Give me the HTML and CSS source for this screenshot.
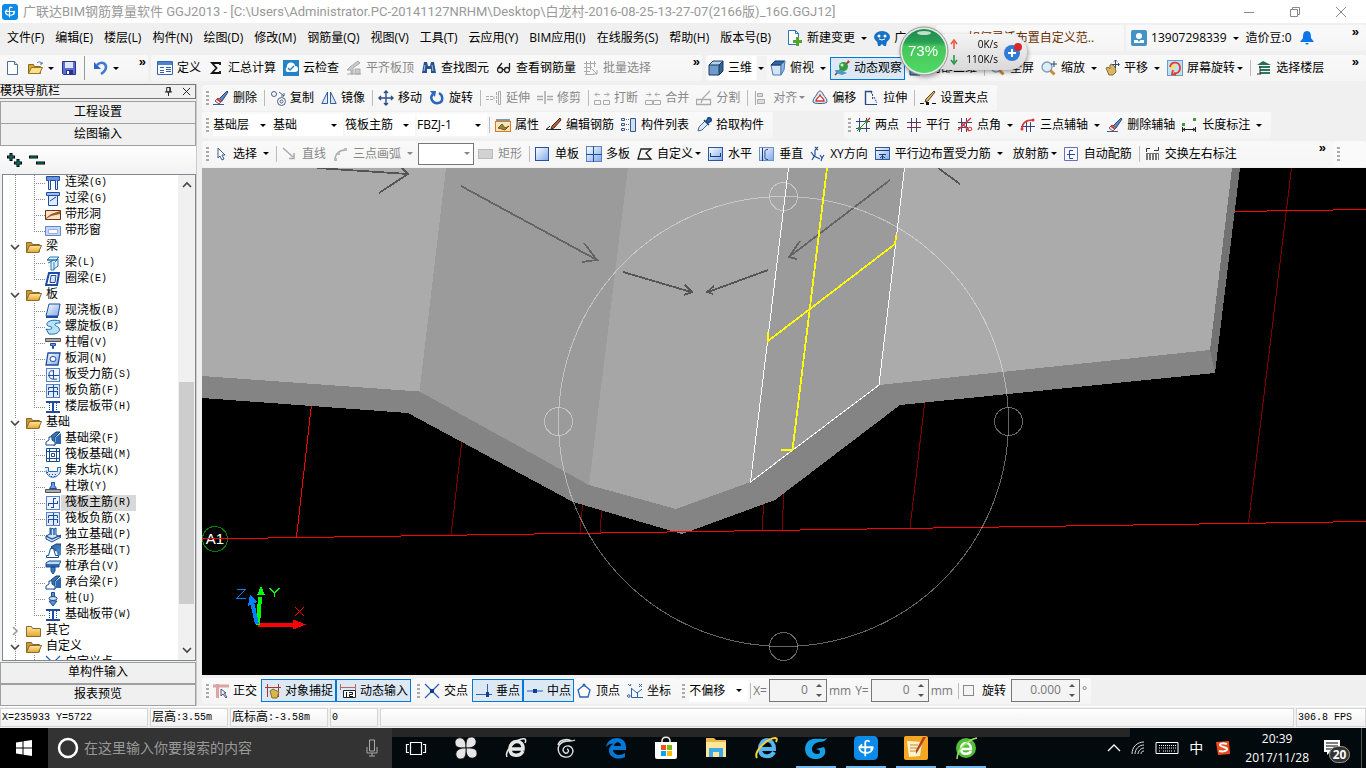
FILE: index.html
```html
<!DOCTYPE html>
<html lang="zh-CN">
<head>
<meta charset="utf-8">
<title>广联达BIM钢筋算量软件 GGJ2013</title>
<link rel="stylesheet" href="styles.css">
</head>
<body>
<svg class="defs" aria-hidden="true">
<defs>
<linearGradient id="gb" x1="0" y1="0" x2="1" y2="1"><stop offset="0" stop-color="#fff"/><stop offset="1" stop-color="#7fa8ea"/></linearGradient>
<linearGradient id="gf" x1="0" y1="0" x2="0" y2="1"><stop offset="0" stop-color="#ffe9a0"/><stop offset="1" stop-color="#e3a52e"/></linearGradient>
<linearGradient id="gl" x1="0" y1="0" x2="0" y2="1"><stop offset="0" stop-color="#1d8a4c"/><stop offset=".3" stop-color="#2aa055"/><stop offset=".4" stop-color="#45c75a"/><stop offset="1" stop-color="#4fd964"/></linearGradient>
</defs>
<symbol id="app" viewBox="0 0 16 16"><rect width="16" height="16" rx="3" fill="#0c8ae8"/><path d="M10 3.500C8.800 2.800 7.500 3 7.500 4.500V13M3.500 7.500h9M5 6L3.500 7.500c0 5 9 5 9 0M11.500 9l1-1.500" fill="none" stroke="#fff" stroke-width="1.200" stroke-linecap="round"/></symbol>
<symbol id="new" viewBox="0 0 16 16"><path d="M2.500 1.500h7l3 3v10h-10z" fill="#fff" stroke="#4d6d9b"/><path d="M9.500 1.500v3h3" fill="#dbe7f7" stroke="#4d6d9b"/></symbol>
<symbol id="open" viewBox="0 0 16 16"><path d="M.5 13.500V4.500h5l1 2h6v7z" fill="#d9a63b" stroke="#8a6a1c"/><path d="M.5 13.500l3-6h11l-3 6z" fill="#ffe08a" stroke="#9a7520"/><path d="M9 3c2-2 4-1 5 1m0-2v2h-2" fill="none" stroke="#4b6ea0"/></symbol>
<symbol id="save" viewBox="0 0 16 16"><path d="M1.500 1.500h13v13h-12l-1-1z" fill="#5d6fd0" stroke="#27348b"/><path d="M4 2h8v6H4z" fill="#dfe6fb"/><path d="M5 10h7v4H5z" fill="#27348b"/><path d="M6 11h2v3H6z" fill="#fff"/></symbol>
<symbol id="undo" viewBox="0 0 16 16"><path d="M4 5c4-4 9-2 9 2 0 3-2 5-5 7" fill="none" stroke="#4179d0" stroke-width="2.600"/><path d="M1 2v7h7z" fill="#2f66c4"/></symbol>
<symbol id="define" viewBox="0 0 16 16"><path d="M.5 1.500h15v13H.5z" fill="#fff" stroke="#3666b0"/><path d="M1 2h14v3H1z" fill="#4d84d0"/><path d="M3 7.500h4M3 10.500h4M9 7.500h5M9 9.500h5M9 11.500h5M3 12.500h4" stroke="#345e9e"/></symbol>
<symbol id="sum" viewBox="0 0 16 16"><path d="M12 5V3H4l4.500 5L4 13h8v-2" fill="none" stroke="#111" stroke-width="1.800"/></symbol>
<symbol id="cloud" viewBox="0 0 16 16"><rect width="16" height="16" fill="#2383c8"/><path d="M4 12a3 3 0 0 1 0-5 4 4 0 0 1 8-1 3 3 0 0 1 0 6z" fill="#fff"/><path d="M5 8l2 2 4-4" fill="none" stroke="#2383c8" stroke-width="1.500"/></symbol>
<symbol id="slab" viewBox="0 0 16 16"><path d="M1 10l3-3 8-6 2 2-7 5v6H5v-4zM9 9h5v5H9zM1 14h14" fill="#c9c9c9" stroke="#aaa"/></symbol>
<symbol id="find" viewBox="0 0 16 16"><path d="M3 2h3l1 4h2l1-4h3l2 11h-5V9H6v4H1z" fill="#27538f"/><path d="M4 5l-1 6M11 5l1 6" stroke="#9fc1ec"/></symbol>
<symbol id="glass" viewBox="0 0 16 16"><g fill="none" stroke="#222" stroke-width="1.300"><circle cx="4" cy="10" r="2.500"/><circle cx="11" cy="10" r="2.500"/><path d="M6.500 10q1-1 2 0M2 8l4-5M13.500 10V3"/></g></symbol>
<symbol id="batch" viewBox="0 0 16 16"><path d="M3.500 1v13M7.500 1v9M1 3.500h12M1 7.500h8M1 11.500h6M11.500 1v6M2 14.500h9M9 9l5 5m0-4v4h-4" fill="none" stroke="#aaa"/></symbol>
<symbol id="cube" viewBox="0 0 16 16"><path d="M1 5h10v10H1z" fill="#6f9ccc"/><path d="M1 5l4-4h10l-4 4z" fill="#b5d1ee"/><path d="M11 5l4-4v10l-4 4z" fill="#35608f"/><path d="M1 5h10v10H1zM1 5l4-4h10v10l-4 4M11 5l4-4" fill="none" stroke="#173a63"/></symbol>
<symbol id="topv" viewBox="0 0 16 16"><path d="M1 5h10v10H3z" fill="#d5e4f5" stroke="#4a7ab5"/><path d="M1 5l4-4h10l-4 4z" fill="#2c67a8" stroke="#173a63"/><path d="M11 5l4-4-1 9-3 5z" fill="#93b8df" stroke="#4a7ab5"/></symbol>
<symbol id="orbit" viewBox="0 0 16 16"><path d="M1 15L15 1" stroke="#7a3b1b" stroke-width="1.500"/><path d="M1 10h6l6 3-5 2-6-2z" fill="#4d9ac5"/><circle cx="9.500" cy="6.500" r="4.500" fill="#2f9b42"/><circle cx="8" cy="5" r="1.500" fill="#d8f5c5"/><path d="M14 0l2 2-4 3z" fill="#c33"/></symbol>
<symbol id="mag" viewBox="0 0 16 16"><circle cx="6" cy="7" r="5" fill="#dcecfb" stroke="#8299b5" stroke-width="1.300"/><path d="M9.500 10.500l4 4" stroke="#c58a3b" stroke-width="3"/><path d="M13 1v6M10 4h6" stroke="#27466e"/></symbol>
<symbol id="hand" viewBox="0 0 16 16"><path d="M2 8l2-1 2 2V5l2-1 3 3 1 5-3 3H5z" fill="#d8b866" stroke="#8b6a2a"/><path d="M11.500 0v8M8 4.500h7M10 1.500L11.500 0 13 1.500M14 3l1.500 1.500L14 6" fill="none" stroke="#334c78"/></symbol>
<symbol id="rot" viewBox="0 0 16 16"><rect x=".5" y=".5" width="15" height="15" fill="#bfe1fa" stroke="#6a9dcb"/><path d="M3 9V4h5v5zM9 15v-4h5" fill="#f4e06a"/><path d="M3 7c1-6 10-6 10 1 0 4-3 6-6 5M6 10l-1 4 4 1" fill="none" stroke="#e23b36" stroke-width="1.800"/></symbol>
<symbol id="floor" viewBox="0 0 16 16"><path d="M1 5l6-4 8 4z" fill="#286b56"/><path d="M3 7h11M4 10h10M4 13h10" stroke="#2b785c" stroke-width="2"/><path d="M4 6v8M1 14h4" stroke="#333"/></symbol>
<symbol id="erase" viewBox="0 0 16 16"><path d="M14 1l1 1-6 9-3-2z" fill="#5d88c3" stroke="#294979"/><path d="M5 8l4 3-3 3-4-3z" fill="#f6eef0" stroke="#7b5260"/><path d="M4 9l4 3" stroke="#d33" stroke-width="1.600"/><path d="M0 14.500h11" stroke="#355b91"/></symbol>
<symbol id="copy" viewBox="0 0 16 16"><g fill="none" stroke="#4c6287"><circle cx="4" cy="4" r="2.500"/><circle cx="11.500" cy="11.500" r="4"/><circle cx="11.500" cy="11.500" r="1.500"/><path d="M9 2l5 4m0-3v3h-3"/></g></symbol>
<symbol id="mirror" viewBox="0 0 16 16"><path d="M6.500 2v11.500H.8zM9.500 2v11.500h5.700z" fill="#dce8f7" stroke="#315b9b"/></symbol>
<symbol id="move" viewBox="0 0 16 16"><path d="M8 1v14M1 8h14M6 3l2-2 2 2M6 13l2 2 2-2M3 6L1 8l2 2M13 6l2 2-2 2" fill="none" stroke="#2d5082" stroke-width="1.400"/></symbol>
<symbol id="spin" viewBox="0 0 16 16"><path d="M4 4c-4 4 0 10 5 9 6-1 5-8 1-10" fill="none" stroke="#2c65bd" stroke-width="2.500"/><path d="M7 1H1l5 6z" fill="#2c65bd"/></symbol>
<symbol id="extend" viewBox="0 0 16 16"><path d="M0 6.500h8v3H0M10.500 2v12" fill="none" stroke="#aaa" stroke-dasharray="3 1"/><path d="M12.500 1.500h2v13h-2z" fill="none" stroke="#aaa"/></symbol>
<symbol id="trim" viewBox="0 0 16 16"><path d="M0 6.500h6M0 9.500h6M10 6.500h6M10 9.500h6M8 1v13" fill="none" stroke="#aaa" stroke-width="1.500"/></symbol>
<symbol id="brk" viewBox="0 0 16 16"><path d="M.5 10.500h6v4h-6zM9.500 10.500h6v4h-6zM1 4.500h5M10 4.500h5M3 2.500l-2 2 2 2M13 2.500l2 2-2 2" fill="none" stroke="#aaa"/></symbol>
<symbol id="join" viewBox="0 0 16 16"><path d="M.5 10.500h7v4h-7zM8.500 10.500h7v4h-7zM1 4.500h5M10 4.500h5M4 2.500l2 2-2 2M12 2.500l-2 2 2 2" fill="none" stroke="#aaa"/></symbol>
<symbol id="split" viewBox="0 0 16 16"><path d="M.5 9.500h14v5H.5zM14 1l-7 7-2 5" fill="none" stroke="#aaa" stroke-width="1.300"/></symbol>
<symbol id="align" viewBox="0 0 16 16"><path d="M2.500 1v14M4.500 3.500h5v3h-5zM4.500 9.500h7v4h-7z" fill="#ddd" stroke="#aaa"/></symbol>
<symbol id="offset" viewBox="0 0 16 16"><path d="M1 12c0-4 2-4 4-8 2-4 4-4 6 0 2 4 4 4 4 8 0 2-14 2-14 0z" fill="#e3edf9" stroke="#355b8c"/><path d="M4 11c0-3 2-2 4-6 2 4 4 3 4 6z" fill="#fff" stroke="#d3362e" stroke-width="1.300"/></symbol>
<symbol id="stretch" viewBox="0 0 16 16"><path d="M2.500 14.500V1.500h6v2" fill="none" stroke="#244c8d" stroke-width="1.400"/><path d="M2 14.500h12" stroke="#244c8d"/><path d="M9.500 4v6M11 7l3 6" stroke="#244c8d" stroke-dasharray="2 1"/></symbol>
<symbol id="grippt" viewBox="0 0 16 16"><path d="M14 1l1 1-7 9-3 1 1-3z" fill="#eeb45a" stroke="#59432c"/><path d="M0 13.500h4M12 13.500h4" stroke="#111"/><path d="M6 12h3v3H6z" fill="#111"/></symbol>
<symbol id="props" viewBox="0 0 16 16"><path d="M1 2h14v3H1z" fill="#7b97b8"/><rect x=".5" y="4.500" width="15" height="10" fill="#fbe5ba" stroke="#d77a23"/><path d="M3 11l4-4 3 4 4-2-4 4z" fill="#7a933c" stroke="#8b4e14"/></symbol>
<symbol id="editr" viewBox="0 0 16 16"><path d="M4 9l-4 3.500h15" fill="none" stroke="#222"/><path d="M14 1l1 2-7 8-3 1 1-3z" fill="#b0613b" stroke="#4c2a18"/></symbol>
<symbol id="list" viewBox="0 0 16 16"><path d="M.5 1.500h3v2h-3zM.5 6.500h3v2h-3zM.5 11.500h3v2h-3z" fill="none" stroke="#35588c"/><path d="M5 2.500h3M5 7.500h3M5 12.500h3" stroke="#666" stroke-dasharray="1 1"/><path d="M9.500 1.500h5v13h-5z" fill="#cfe0f5" stroke="#35588c"/></symbol>
<symbol id="pick" viewBox="0 0 16 16"><path d="M2 14l1-4 6-6 3 3-6 6z" fill="#dceafa" stroke="#4d6a90"/><path d="M8 3l5 5M10 5l2-4c2-1 4 1 3 3l-3 2z" fill="#2f67ad" stroke="#1b457f" stroke-width="1.500"/></symbol>
<symbol id="twopt" viewBox="0 0 16 16"><path d="M4.500 1v14M11.500 1v14M1 4.500h14M1 11.500h14" stroke="#35467c"/><path d="M2 14L13 3" stroke="#2a8a2a"/><path d="M3 10h3v3H3zM10 3h3v3h-3z" fill="#2a9a2a"/><path d="M12 4l3-3" stroke="#d22" stroke-width="1.500"/></symbol>
<symbol id="par" viewBox="0 0 16 16"><path d="M5.500 1v14M10.500 1v14" stroke="#35467c"/><path d="M1 5.500h14M1 10.500h14" stroke="#7b2b42"/></symbol>
<symbol id="ptang" viewBox="0 0 16 16"><path d="M4.500 1v14M9.500 1v14M1 5.500h14M1 10.500h10" stroke="#35467c"/><path d="M1 13L14 1M5 6l7 8" stroke="#d33" stroke-width="1.400"/><circle cx="13" cy="12" r="1.800" fill="none" stroke="#d33"/></symbol>
<symbol id="threeax" viewBox="0 0 16 16"><path d="M6.500 4v11M10.500 5v10M1 9.500h14" stroke="#35467c"/><path d="M2 12c0-6 3-9 11-9" fill="none" stroke="#d33" stroke-width="1.500"/><circle cx="2" cy="12" r="1.500" fill="#d33"/><circle cx="13" cy="3" r="1.500" fill="#d33"/></symbol>
<symbol id="len" viewBox="0 0 16 16"><path d="M1 12.500h13M.5 10v5M13.500 10v5M3 11l-2 1.500L3 14M11 11l2 1.500-2 1.500" fill="none" stroke="#222"/><path d="M0 6h3v3H0zM11 1h3v3h-3z" fill="#3a9b3a"/></symbol>
<symbol id="cursor" viewBox="0 0 16 16"><path d="M5 2v10l2-2 2 4 2-1-2-4h3z" fill="#fff" stroke="#3c5a86"/></symbol>
<symbol id="line" viewBox="0 0 16 16"><path d="M1 2l10 9M12 7v5.500H7" fill="none" stroke="#aaa" stroke-width="1.500"/></symbol>
<symbol id="arc" viewBox="0 0 16 16"><path d="M2 14c0-6 4-10 10-10" fill="none" stroke="#aaa" stroke-width="1.300"/><path d="M1 12h3v3H1zM4 6h3v3H4zM11 2h3v3h-3z" fill="#bbb"/></symbol>
<symbol id="rect" viewBox="0 0 16 16"><rect x=".5" y="3.500" width="14" height="9" fill="#d2d2d2" stroke="#bbb"/></symbol>
<symbol id="one" viewBox="0 0 16 16"><rect x=".5" y="1.500" width="13" height="13" fill="url(#gb)" stroke="#2651a8"/></symbol>
<symbol id="multi" viewBox="0 0 16 16"><rect x=".5" y=".5" width="15" height="15" fill="url(#gb)" stroke="#5d83be"/><path d="M0 8.500h16M7.500 0v16" stroke="#234d8f"/></symbol>
<symbol id="poly" viewBox="0 0 16 16"><path d="M1 13L4 3h10L9 7l5 6z" fill="none" stroke="#222" stroke-width="1.300"/></symbol>
<symbol id="hor" viewBox="0 0 16 16"><rect x=".5" y="1.500" width="14" height="13" fill="url(#gb)" stroke="#2c57a0"/><path d="M2 10.500h11M2.500 7v3M12.500 7v3" stroke="#183d7c"/></symbol>
<symbol id="ver" viewBox="0 0 16 16"><rect x=".5" y="1.500" width="14" height="13" fill="url(#gb)" stroke="#6b8fc8"/><path d="M9 3.500c-4 0-3 2-3 5s-1 5 3 5M3.500 2v13" fill="none" stroke="#183d7c"/></symbol>
<symbol id="xy" viewBox="0 0 16 16"><path d="M1 6l3 4 6 3M5 4v5l-3 5M5 1l3 3M8 1L5 4M10 9l2 3 2-3M12 12l-1 3" fill="none" stroke="#234f96" stroke-width="1.200"/></symbol>
<symbol id="edge" viewBox="0 0 16 16"><rect x=".5" y="1.500" width="14" height="12" fill="url(#gb)" stroke="#2f5799"/><path d="M1 4.500h13M4 8.500h7M7.500 8v5M5 12l2.500-2 2.500 2" fill="none" stroke="#183d7c"/></symbol>
<symbol id="auto" viewBox="0 0 16 16"><path d="M.5 1.500h13v13H.5z" fill="#f6f9ff" stroke="#6d6dba"/><path d="M9 4.500H5.500v8H9M3 8.500h8" fill="none" stroke="#274ca0"/></symbol>
<symbol id="swap" viewBox="0 0 16 16"><path d="M1 7h13v7H1z" fill="#777"/><path d="M3.500 8v6M6.500 8v6M9.500 8v6M12.500 8v6" stroke="#fff"/><path d="M1.500 6V2.500H5M9 4.500h4.500V1" fill="none" stroke="#333"/></symbol>
<symbol id="change" viewBox="0 0 16 16"><path d="M1.500.5h7l3 3v11h-10z" fill="#fff" stroke="#2877bd"/><path d="M8.500.5v3h3" fill="none" stroke="#2877bd"/><path d="M9 7h3v3h3v3h-3v3H9v-3H6v-3h3z" fill="#53a62c"/></symbol>
<symbol id="bot" viewBox="0 0 16 16"><ellipse cx="8" cy="7" rx="8" ry="6" fill="#1672c4"/><path d="M3 11h10l-1 5h-2l-2-2-2 2H4z" fill="#1672c4"/><circle cx="5" cy="6" r="1.500" fill="#fff"/><circle cx="11" cy="6" r="1.500" fill="#fff"/><path d="M5 9q3 2 6 0" fill="none" stroke="#fff"/></symbol>
<symbol id="user" viewBox="0 0 16 16"><rect width="16" height="16" rx="2" fill="#4393c7"/><circle cx="8" cy="6" r="3" fill="#fff"/><path d="M3 10h10v3H3z" fill="#fff"/><path d="M6 9l2 3 2-3" fill="#4393c7"/></symbol>
<symbol id="bell" viewBox="0 0 16 16"><path d="M8 1c4 0 4 4 4 7l3 4H1l3-4c0-3 0-7 4-7z" fill="#0d75e8"/><path d="M6 13h4l-2 2z" fill="#0d75e8"/></symbol>
<symbol id="ortho" viewBox="0 0 16 16"><path d="M0 3h16M4.500 1v14" stroke="#dba3a3" stroke-width="3"/><path d="M8 6v7l2-2 3 4 1-1-3-4h2z" fill="#eef" stroke="#557"/></symbol>
<symbol id="snap" viewBox="0 0 16 16"><path d="M0 4.500h16M2.500 1v13M13.500 1v13" stroke="#a33"/><path d="M5 8l3-2 6 3-2 6H7z" fill="#d8b64e" stroke="#8b6a2a"/></symbol>
<symbol id="dyn" viewBox="0 0 16 16"><path d="M0 4.500h16M.5 1v6M15.500 1v6" stroke="#b66"/><path d="M3.500 7.500h12v7h-12z" fill="#fff" stroke="#222"/><path d="M6.500 9v5M9 9.500h3.500v2h-3v2H13" fill="none" stroke="#111"/></symbol>
<symbol id="cross" viewBox="0 0 16 16"><path d="M1 1l14 14M15 1L1 15" stroke="#2c62b5" stroke-width="1.300"/><path d="M6 6h4v4H6z" fill="#123c8c"/></symbol>
<symbol id="perp" viewBox="0 0 16 16"><path d="M11.500 1v10M0 11.500h16" stroke="#2c62b5"/><path d="M10 9h3v5h-3z" fill="#123c8c"/></symbol>
<symbol id="midp" viewBox="0 0 16 16"><path d="M0 8h16" stroke="#5b8bd0" stroke-width="1.500"/><path d="M6 6h4v4H6z" fill="#123c8c"/></symbol>
<symbol id="vert" viewBox="0 0 16 16"><path d="M8 2l6 5-2 7H4L2 7z" fill="#fff" stroke="#2c62b5" stroke-width="1.300"/><circle cx="8" cy="2" r="1.500" fill="#2c62b5"/></symbol>
<symbol id="coord" viewBox="0 0 16 16"><path d="M4.500 5v9.500H16M4 5l6 5 5-4M1 1l2 2 1-2M12 1l3 3M15 1l-3 3M10.500 9v5" fill="none" stroke="#2c62b5"/><circle cx="1.800" cy="13" r="1.300" fill="none" stroke="#2c62b5"/></symbol>
<symbol id="fo" viewBox="0 0 16 16"><path d="M.5 13V3.500h5l1 2h7V13z" fill="#c9973c" stroke="#8a6a2c"/><path d="M.5 13.500l3-7h12l-3 7z" fill="url(#gf)" stroke="#8a6a2c"/></symbol>
<symbol id="fc" viewBox="0 0 16 16"><path d="M.5 13.500v-10h5l1 2h8v8z" fill="url(#gf)" stroke="#8a6a2c"/></symbol>
<symbol id="t-lian" viewBox="0 0 16 16"><path d="M1.500 1.500h13v4h-13z" fill="#6b93dd" stroke="#1c4ba0"/><path d="M3.500 5.500v9h2v-9M10.500 5.500v9h2v-9" fill="#e4eefc" stroke="#1c4ba0"/></symbol>
<symbol id="t-guo" viewBox="0 0 16 16"><path d="M1.500 1.500h13v3h-13z" fill="#9fbdf0" stroke="#1c4ba0"/><path d="M3.500 4.500h9v10h-9zM5 10l6-4" fill="#dfeafd" stroke="#1c4ba0"/></symbol>
<symbol id="t-dong" viewBox="0 0 16 16"><path d="M.5 3.500h15v9H.5z" fill="#fbe2c8" stroke="#6e3510"/><path d="M1 11l5-4 9-3v3l-9 2-5 3z" fill="#9c5b28"/></symbol>
<symbol id="t-win" viewBox="0 0 16 16"><path d="M.5 3.500h15v9H.5z" fill="#c6d7fa" stroke="#6485cd"/><path d="M3.500 6.500h9v4h-9z" fill="#fff" stroke="#94aee6"/></symbol>
<symbol id="t-liang" viewBox="0 0 16 16"><path d="M2 5l3-3h9l-3 3zM6 6v9h3V7M10 7l3-3v7l-4 3M2 5l9 0M3 8l6-3" fill="#dff1fb" stroke="#2474b4"/></symbol>
<symbol id="t-quan" viewBox="0 0 16 16"><path d="M4 2h10l-2 12H1z" fill="#fff" stroke="#1c4ba0" stroke-width="2"/><path d="M6 4.500h5l-1 7H5z" fill="#d7e4fa" stroke="#1c4ba0"/></symbol>
<symbol id="t-ban" viewBox="0 0 16 16"><path d="M4 1h11l-2 12H1z" fill="url(#gb)" stroke="#1c4ba0"/><path d="M1 14h12" stroke="#1c4ba0" stroke-width="2"/></symbol>
<symbol id="t-luo" viewBox="0 0 16 16"><path d="M15 2C8 0 1 2 2 6c1 2 5 1 5 3 0 1-3 2-6 1l3 5c7 1 12-2 10-6-1-2-5-2-4-4 1-1 3-1 5-1z" fill="#b7e3f8" stroke="#1f6ab4"/></symbol>
<symbol id="t-mao" viewBox="0 0 16 16"><path d="M.5 3.500h15v3H.5z" fill="#aaa" stroke="#555"/><path d="M5.500 8.500h5v2h-2v3h-1v-3h-2z" fill="#6f9fe8" stroke="#1c4ba0"/></symbol>
<symbol id="t-hole" viewBox="0 0 16 16"><path d="M3 2h12l-2 12H1z" fill="url(#gb)" stroke="#1c4ba0" stroke-width="1.300"/><ellipse cx="8" cy="8" rx="3" ry="2.500" fill="#fff" stroke="#1c4ba0"/></symbol>
<symbol id="t-s" viewBox="0 0 16 16"><rect x="1.500" y="1.500" width="13" height="13" fill="#eef4ff" stroke="#5a80ca"/><path d="M3 8.500h11M8 4c-3-1-4 1-4 4s2 5 8 4M8.500 3v9" fill="none" stroke="#1c4ba0"/></symbol>
<symbol id="t-f" viewBox="0 0 16 16"><rect x="1.500" y="1.500" width="13" height="13" fill="#e0eafd" stroke="#5a80ca"/><path d="M8.500 2v12M3.500 7V4.500h9V7M3.500 9v3M12.500 9v3M3 8.500h10" fill="none" stroke="#1c4ba0"/></symbol>
<symbol id="t-dai" viewBox="0 0 16 16"><path d="M1 3h14M1 13h14" stroke="#1c4ba0" stroke-width="2"/><path d="M4.500 4v8M11.500 4v8" stroke="#1c4ba0" stroke-dasharray="1 1"/><path d="M8 4v8" stroke="#1c4ba0" stroke-width="2"/></symbol>
<symbol id="t-jl" viewBox="0 0 16 16"><path d="M6 5l5-4h4l-5 5v8H8z" fill="#3b72b4" stroke="#123f7b"/><path d="M1 14v-3l3-2V6h3v3l3 2v3z" fill="#fff" stroke="#174c91"/><path d="M11 6l5-4v11h-5z" fill="#2d66ac"/></symbol>
<symbol id="t-fa" viewBox="0 0 16 16"><path d="M1.500 1.500h13v13h-13zM6.500 6.500h3v3h-3zM1 4.500h14M1 11.500h14M4.500 1v14M11.500 1v14" fill="none" stroke="#174c91"/></symbol>
<symbol id="t-keng" viewBox="0 0 16 16"><path d="M0 4.500h3.500v4h9v-4H16c0 12-14 13-15 3" fill="#dbe9fb" stroke="#2b69b4"/><path d="M4 11.500h8M2.500 9v1M6 13.500h5" stroke="#174c91" stroke-dasharray="1 2"/></symbol>
<symbol id="t-dun" viewBox="0 0 16 16"><path d="M.5 10.500h15v3H.5z" fill="#aaa" stroke="#555"/><path d="M4.500 9.500l2-3v-3h3v3l2 3z" fill="#6f9fe8" stroke="#1c4ba0"/></symbol>
<symbol id="t-r" viewBox="0 0 16 16"><rect x="1.500" y="1.500" width="13" height="13" fill="#eef4ff" stroke="#5a80ca"/><path d="M8.500 3v10M3 8.500h10M3.500 8v3M12.500 8.500V6M8.500 3.500H11M8.500 12.500H6" fill="none" stroke="#1c4ba0"/></symbol>
<symbol id="t-p" viewBox="0 0 16 16"><path d="M5 1l4 1 2-1v7l5 2-9 5-6-3V9l4-2z" fill="#cfe2f8" stroke="#174c91"/><path d="M6 2v6M9 2v6M1 9l6 3 9-4" fill="none" stroke="#174c91" stroke-width="1.300"/></symbol>
<symbol id="t-t" viewBox="0 0 16 16"><path d="M6 4l5-3h5v3l-5 4z" fill="#3b72b4" stroke="#123f7b"/><path d="M11 7l5-4v9l-3 1z" fill="#4a80be"/><path d="M1.500 14.500v-2h2l2-7h3l2 7h3v2z" fill="#fff" stroke="#174c91"/></symbol>
<symbol id="t-v" viewBox="0 0 16 16"><path d="M1 4l3-2h12l-2 4H1z" fill="#bcd8f5" stroke="#174c91"/><path d="M1 6h13v2H1zM6 8h4v4l-2 3-2-3z" fill="#3d78bd" stroke="#174c91"/></symbol>
<symbol id="t-u" viewBox="0 0 16 16"><path d="M6.500 1.500h3V10H12l-4 5-4-5h2.500z" fill="#5b90cc" stroke="#174c91"/><ellipse cx="8" cy="7.500" rx="4" ry="2" fill="#cfe2f8" stroke="#174c91"/></symbol>
</svg>

<header class="titlebar">
  <svg class="i"><use href="#app"/></svg>
  <h1>广联达BIM钢筋算量软件 GGJ2013 - [C:\Users\Administrator.PC-20141127NRHM\Desktop\白龙村-2016-08-25-13-27-07(2166版)_16G.GGJ12]</h1>
  <div class="winbtns">
    <button aria-label="最小化"><svg viewBox="0 0 12 12"><path d="M1 6.500h10"/></svg></button>
    <button aria-label="还原"><svg viewBox="0 0 12 12"><path d="M1.500 3.500h7v7h-7zM3.500 3.500v-2h7v7h-2"/></svg></button>
    <button aria-label="关闭"><svg viewBox="0 0 12 12"><path d="M1 1l10 10M11 1L1 11"/></svg></button>
  </div>
</header>

<div class="menubar">
  <nav class="menu">
    <button>文件(F)</button><button>编辑(E)</button><button>楼层(L)</button><button>构件(N)</button><button>绘图(D)</button><button>修改(M)</button><button>钢筋量(Q)</button><button>视图(V)</button><button>工具(T)</button><button>云应用(Y)</button><button>BIM应用(I)</button><button>在线服务(S)</button><button>帮助(H)</button><button>版本号(B)</button>
  </nav>
  <div class="band plain">
    <button class="t wide"><svg class="i"><use href="#change"/></svg>新建变更</button>
    <button class="t"><svg class="i"><use href="#bot"/></svg>广小二</button>
  </div>
  <div class="band notice"><a href="#tip">如何灵活布置自定义范..</a></div>
  <div class="band account">
    <button class="t wide"><svg class="i"><use href="#user"/></svg>13907298339</button>
    <button class="t">造价豆:0</button>
    <button class="t" aria-label="消息"><svg class="i"><use href="#bell"/></svg></button>
    <button class="more">»</button>
  </div>
</div>

<div class="mainbar">
  <div class="band files">
    <button class="t" aria-label="新建"><svg class="i"><use href="#new"/></svg></button>
    <button class="t wide" aria-label="打开"><svg class="i"><use href="#open"/></svg></button>
    <button class="t" aria-label="保存"><svg class="i"><use href="#save"/></svg></button>
    <i class="sep dark"></i>
    <button class="t wide" aria-label="撤销"><svg class="i"><use href="#undo"/></svg></button>
    <button class="more">»</button>
  </div>
  <div class="band tools">
    <button class="t"><svg class="i"><use href="#define"/></svg>定义</button>
    <button class="t"><svg class="i"><use href="#sum"/></svg>汇总计算</button>
    <button class="t"><svg class="i"><use href="#cloud"/></svg>云检查</button>
    <button class="t" disabled><svg class="i"><use href="#slab"/></svg>平齐板顶</button>
    <button class="t"><svg class="i"><use href="#find"/></svg>查找图元</button>
    <button class="t"><svg class="i"><use href="#glass"/></svg>查看钢筋量</button>
    <button class="t" disabled><svg class="i"><use href="#batch"/></svg>批量选择</button>
    <button class="more">»</button>
  </div>
  <div class="band views">
    <button class="t wide white"><svg class="i"><use href="#cube"/></svg>三维</button>
    <button class="t wide"><svg class="i"><use href="#topv"/></svg>俯视</button>
    <button class="t on"><svg class="i"><use href="#orbit"/></svg>动态观察</button>
    <button class="t"><svg class="i"><use href="#cube"/></svg>局部三维</button>
    <i class="sep"></i>
    <button class="t"><svg class="i"><use href="#mag"/></svg>全屏</button>
    <button class="t wide"><svg class="i"><use href="#mag"/></svg>缩放</button>
    <button class="t wide"><svg class="i"><use href="#hand"/></svg>平移</button>
    <button class="t narrow"><svg class="i"><use href="#rot"/></svg>屏幕旋转</button>
    <i class="sep"></i>
    <button class="t"><svg class="i"><use href="#floor"/></svg>选择楼层</button>
    <button class="more">»</button>
  </div>
</div>

<div class="work">
  <aside class="side">
    <div class="sidehead"><h2>模块导航栏</h2>
      <button aria-label="固定"><svg viewBox="0 0 10 10"><path d="M3 .5h4v5H3zM6.500 1v4M1 5.500h8M5 6v4"/></svg></button>
      <button aria-label="关闭"><svg viewBox="0 0 10 10"><path d="M1 1l8 8M9 1L1 9"/></svg></button></div>
    <button class="sbtn">工程设置</button>
    <button class="sbtn">绘图输入</button>
    <div class="sidetools">
      <button aria-label="全部展开"><svg viewBox="0 0 18 16"><path d="M6 1v8M2 5h8M13 7v8M9 11h8" stroke="#000" stroke-width="3"/><path d="M6 2v6M3 5h6M13 8v6M10 11h6" stroke="#00988c"/></svg></button>
      <button aria-label="全部折叠"><svg viewBox="0 0 18 16"><path d="M1 5h9M8 11h9" stroke="#000" stroke-width="3"/><path d="M2 5h7M9 11h7" stroke="#00988c"/></svg></button>
    </div>
    <div class="treebox">
      <ul class="tree">
        <li><ul>
          <li><svg class="i"><use href="#t-lian"/></svg>连梁<b>(G)</b></li>
          <li><svg class="i"><use href="#t-guo"/></svg>过梁<b>(G)</b></li>
          <li><svg class="i"><use href="#t-dong"/></svg>带形洞</li>
          <li class="last"><svg class="i"><use href="#t-win"/></svg>带形窗</li>
        </ul></li>
        <li><div class="folder"><svg class="chev"><path d="M1 2l4 4 4-4"/></svg><svg class="i"><use href="#fo"/></svg>梁</div><ul>
          <li><svg class="i"><use href="#t-liang"/></svg>梁<b>(L)</b></li>
          <li class="last"><svg class="i"><use href="#t-quan"/></svg>圈梁<b>(E)</b></li>
        </ul></li>
        <li><div class="folder"><svg class="chev"><path d="M1 2l4 4 4-4"/></svg><svg class="i"><use href="#fo"/></svg>板</div><ul>
          <li><svg class="i"><use href="#t-ban"/></svg>现浇板<b>(B)</b></li>
          <li><svg class="i"><use href="#t-luo"/></svg>螺旋板<b>(B)</b></li>
          <li><svg class="i"><use href="#t-mao"/></svg>柱帽<b>(V)</b></li>
          <li><svg class="i"><use href="#t-hole"/></svg>板洞<b>(N)</b></li>
          <li><svg class="i"><use href="#t-s"/></svg>板受力筋<b>(S)</b></li>
          <li><svg class="i"><use href="#t-f"/></svg>板负筋<b>(F)</b></li>
          <li class="last"><svg class="i"><use href="#t-dai"/></svg>楼层板带<b>(H)</b></li>
        </ul></li>
        <li><div class="folder"><svg class="chev"><path d="M1 2l4 4 4-4"/></svg><svg class="i"><use href="#fo"/></svg>基础</div><ul>
          <li><svg class="i"><use href="#t-jl"/></svg>基础梁<b>(F)</b></li>
          <li><svg class="i"><use href="#t-fa"/></svg>筏板基础<b>(M)</b></li>
          <li><svg class="i"><use href="#t-keng"/></svg>集水坑<b>(K)</b></li>
          <li><svg class="i"><use href="#t-dun"/></svg>柱墩<b>(Y)</b></li>
          <li><svg class="i"><use href="#t-r"/></svg><span class="sel">筏板主筋<b>(R)</b></span></li>
          <li><svg class="i"><use href="#t-f"/></svg>筏板负筋<b>(X)</b></li>
          <li><svg class="i"><use href="#t-p"/></svg>独立基础<b>(P)</b></li>
          <li><svg class="i"><use href="#t-t"/></svg>条形基础<b>(T)</b></li>
          <li><svg class="i"><use href="#t-v"/></svg>桩承台<b>(V)</b></li>
          <li><svg class="i"><use href="#t-jl"/></svg>承台梁<b>(F)</b></li>
          <li><svg class="i"><use href="#t-u"/></svg>桩<b>(U)</b></li>
          <li class="last"><svg class="i"><use href="#t-dai"/></svg>基础板带<b>(W)</b></li>
        </ul></li>
        <li><div class="folder"><svg class="chev closed"><path d="M3 0l4 4-4 4"/></svg><svg class="i"><use href="#fc"/></svg>其它</div></li>
        <li><div class="folder"><svg class="chev"><path d="M1 2l4 4 4-4"/></svg><svg class="i"><use href="#fo"/></svg>自定义</div><ul>
          <li><svg class="i"><use href="#cross"/></svg>自定义点</li>
        </ul></li>
      </ul>
      <div class="scroll">
        <svg class="chev"><path d="M1 6l4-4 4 4"/></svg>
        <div class="track"><div class="thumb"></div></div>
        <svg class="chev"><path d="M1 2l4 4 4-4"/></svg>
      </div>
    </div>
    <button class="sbtn">单构件输入</button>
    <button class="sbtn">报表预览</button>
  </aside>

  <main class="main">
    <div class="row r3"><div class="band grip">
      <button class="t"><svg class="i"><use href="#erase"/></svg>删除</button><i class="sep"></i>
      <button class="t"><svg class="i"><use href="#copy"/></svg>复制</button>
      <button class="t"><svg class="i"><use href="#mirror"/></svg>镜像</button><i class="sep"></i>
      <button class="t"><svg class="i"><use href="#move"/></svg>移动</button>
      <button class="t"><svg class="i"><use href="#spin"/></svg>旋转</button><i class="sep"></i>
      <button class="t" disabled><svg class="i"><use href="#extend"/></svg>延伸</button>
      <button class="t" disabled><svg class="i"><use href="#trim"/></svg>修剪</button><i class="sep"></i>
      <button class="t" disabled><svg class="i"><use href="#brk"/></svg>打断</button>
      <button class="t" disabled><svg class="i"><use href="#join"/></svg>合并</button>
      <button class="t" disabled><svg class="i"><use href="#split"/></svg>分割</button><i class="sep"></i>
      <button class="t narrow" disabled><svg class="i"><use href="#align"/></svg>对齐</button>
      <button class="t"><svg class="i"><use href="#offset"/></svg>偏移</button>
      <button class="t"><svg class="i"><use href="#stretch"/></svg>拉伸</button><i class="sep"></i>
      <button class="t"><svg class="i"><use href="#grippt"/></svg>设置夹点</button>
    </div></div>
    <div class="row r4">
      <div class="band grip">
        <span class="combo s"><select aria-label="楼层"><option>基础层</option></select></span>
        <span class="combo"><select aria-label="构件类型"><option>基础</option></select></span>
        <span class="combo"><select aria-label="构件"><option>筏板主筋</option></select></span>
        <span class="combo"><select aria-label="构件名称"><option>FBZJ-1</option></select></span>
        <i class="sep"></i>
        <button class="t"><svg class="i"><use href="#props"/></svg>属性</button>
        <button class="t"><svg class="i"><use href="#editr"/></svg>编辑钢筋</button>
        <button class="t"><svg class="i"><use href="#list"/></svg>构件列表</button>
        <button class="t"><svg class="i"><use href="#pick"/></svg>拾取构件</button>
      </div>
      <div class="band grip axis">
        <button class="t"><svg class="i"><use href="#twopt"/></svg>两点</button>
        <button class="t"><svg class="i"><use href="#par"/></svg>平行</button>
        <button class="t wide"><svg class="i"><use href="#ptang"/></svg>点角</button>
        <button class="t wide"><svg class="i"><use href="#threeax"/></svg>三点辅轴</button>
        <button class="t"><svg class="i"><use href="#erase"/></svg>删除辅轴</button>
        <button class="t wide"><svg class="i"><use href="#len"/></svg>长度标注</button>
      </div>
    </div>
    <div class="row r5">
      <div class="band grip fill">
        <button class="t wide"><svg class="i"><use href="#cursor"/></svg>选择</button><i class="sep"></i>
        <button class="t" disabled><svg class="i"><use href="#line"/></svg>直线</button>
        <button class="t wide" disabled><svg class="i"><use href="#arc"/></svg>三点画弧</button>
        <span class="combo boxed"><select aria-label="画弧方式" disabled><option></option></select></span>
        <button class="t" disabled><svg class="i"><use href="#rect"/></svg>矩形</button><i class="sep"></i>
        <button class="t"><svg class="i"><use href="#one"/></svg>单板</button>
        <button class="t"><svg class="i"><use href="#multi"/></svg>多板</button>
        <button class="t narrow"><svg class="i"><use href="#poly"/></svg>自定义</button>
        <button class="t"><svg class="i"><use href="#hor"/></svg>水平</button>
        <button class="t"><svg class="i"><use href="#ver"/></svg>垂直</button>
        <button class="t"><svg class="i"><use href="#xy"/></svg>XY方向</button>
        <button class="t wide"><svg class="i"><use href="#edge"/></svg>平行边布置受力筋</button>
        <button class="t narrow textonly">放射筋</button>
        <button class="t"><svg class="i"><use href="#auto"/></svg>自动配筋</button><i class="sep"></i>
        <button class="t"><svg class="i"><use href="#swap"/></svg>交换左右标注</button>
        <button class="more">»</button>
      </div>
      <div class="band grip stub"></div>
    </div>

    <svg class="view" viewBox="202 168 1164 507" preserveAspectRatio="xMidYMid slice" role="img" aria-label="三维视图">
      <rect x="0" y="0" width="1600" height="900" fill="#000"/>
      <g stroke="#800000">
        <path d="M462 440L451 535M583 500L580 533M602 505L600 533M764 500L762 530M784 490L782 530M925 400L910 528M1291.500 168L1248.500 523"/>
        <path stroke="#f00" d="M312 400L296.500 537M1234 211.500L1366 209.500"/>
      </g>
      <path fill="#848484" d="M202 376L419 391 589 485 676 509 750 482 879 385 1210 350 1215 373 900 405 775 500 682 534 573 502 408 413 202 398z"/>
      <path fill="#727272" d="M1232 168h8L1215 373 1210 350z"/>
      <path fill="#ababab" d="M202 168H446L419.500 391.500 202 376z"/>
      <path fill="#9b9b9b" d="M446 168H628L589 485 419.500 391.500z"/>
      <path fill="#a6a6a6" d="M628 168H789L750.500 482 676 509 589 485z"/>
      <path fill="#9b9b9b" d="M789 168H905L879 385 750.500 482z"/>
      <path fill="#ababab" d="M905 168H1232L1210 350 879 385z"/>
      <path d="M202 539L1366 521.500" stroke="#f00"/>
      <g fill="none" stroke="#555" stroke-width="1.800">
        <path d="M317 168L408 174M402 168L408 174 379 193M623 272L691 292M685 285L692 292 684 295M768 270L708 292M714 286L707 292 713 294M938 168L960 184"/>
        <path stroke="#646464" d="M461 186L597 260M584 243L597 260 582 262M890 180L789 257M800 241L789 257 797 259"/>
      </g>
      <path d="M788.500 168L750.500 482 879 385 904.500 168" fill="none" stroke="#fff"/>
      <path d="M827 168L792.500 450H781M768 332V341L895 244 896.500 234" fill="none" stroke="#ff0" stroke-width="1.800"/>
      <g fill="none" stroke="#fff" stroke-opacity=".4">
        <circle cx="783.500" cy="421.500" r="225"/><circle cx="783.500" cy="196.500" r="14"/><circle cx="783.500" cy="646.500" r="14"/><circle cx="558.500" cy="421.500" r="14"/><circle cx="1008.500" cy="421.500" r="14"/>
      </g>
      <circle cx="215" cy="539" r="12.500" fill="none" stroke="#008000"/>
      <text x="215" y="544" class="axisname">A1</text>
      <path d="M202 538.500h26" stroke="#f00"/>
      <path d="M258 624.500h37" stroke="#f00" stroke-width="4"/><path d="M293 619.500l13 5-13 5z" fill="#f00"/><path d="M295 607l9 9M304 607l-9 9" stroke="#f00"/>
      <path d="M258 625l2-28" stroke="#0f0" stroke-width="4"/><path d="M261 586l4 9h-8z" fill="#0f0"/><path d="M269.500 588l5 5 5-5M274.500 593v4" fill="none" stroke="#0f0"/>
      <path d="M257 624l-5-22" stroke="#0080ff" stroke-width="4"/><path d="M250 594l7 8-9 4z" fill="#0080ff"/><path d="M236.500 589.500h9l-9 9h9" fill="none" stroke="#0080ff"/>
    </svg>

    <div class="row snapbar">
      <div class="band grip">
        <button class="t"><svg class="i"><use href="#ortho"/></svg>正交</button>
        <button class="t on"><svg class="i"><use href="#snap"/></svg>对象捕捉</button>
        <button class="t on"><svg class="i"><use href="#dyn"/></svg>动态输入</button>
      </div>
      <div class="band grip">
        <button class="t"><svg class="i"><use href="#cross"/></svg>交点</button>
        <button class="t on"><svg class="i"><use href="#perp"/></svg>垂点</button>
        <button class="t on"><svg class="i"><use href="#midp"/></svg>中点</button>
        <button class="t"><svg class="i"><use href="#vert"/></svg>顶点</button>
        <button class="t"><svg class="i"><use href="#coord"/></svg>坐标</button>
      </div>
      <div class="band grip offsets">
        <span class="combo s"><select aria-label="偏移方式"><option>不偏移</option></select></span>
        <i class="sep"></i>
        <label for="ox">X=</label><span class="num"><input id="ox" value="0"><span><button aria-label="增加X"></button><button class="d" aria-label="减少X"></button></span></span><em>mm</em>
        <label for="oy">Y=</label><span class="num"><input id="oy" value="0"><span><button aria-label="增加Y"></button><button class="d" aria-label="减少Y"></button></span></span><em>mm</em>
        <i class="sep"></i>
        <input type="checkbox" id="rotate"><label for="rotate" class="blk">旋转</label>
        <span class="num big"><input aria-label="旋转角度" value="0.000"><span><button aria-label="增加角度"></button><button class="d" aria-label="减少角度"></button></span></span><em>°</em>
      </div>
    </div>
  </main>
</div>

<footer class="status">
  <div class="c1"><b>X=235933 Y=5722</b></div><div class="c2">层高<b>:3.55m</b></div><div class="c3">底标高<b>:-3.58m</b></div><div class="c4"><b>0</b></div><div class="c5"></div><div class="c6"><b>306.8 FPS</b></div>
</footer>

<div class="taskbar">
  <button class="start" aria-label="开始"><svg viewBox="0 0 16 16" width="16" height="16"><path fill="#fff" d="M0 2.500l6.500-1v6H0zM7.500 1.300L16 0v7.500H7.500zM0 8.500h6.500v6L0 13.500zM7.500 8.500H16V16l-8.500-1.300z"/></svg></button>
  <label class="search"><svg viewBox="0 0 22 22" width="22" height="22"><circle cx="11" cy="11" r="9" fill="none" stroke="#fff" stroke-width="2.500"/></svg>
    <input type="text" placeholder="在这里输入你要搜索的内容">
    <svg viewBox="0 0 12 18" width="12" height="18"><path d="M3.500 1h5v11h-5zM1 8v6h10V8M6 14v3M3 17h6" fill="none" stroke="#aaa"/></svg></label>
  <div class="apps">
    <button aria-label="任务视图"><svg viewBox="0 0 24 24"><path d="M6.500 6.500h11v12h-11zM5 8.500H2.500v8H5M19 8.500h2.500v8H19" fill="none" stroke="#fff" stroke-width="1.200"/></svg></button>
    <button aria-label="风车"><svg viewBox="0 0 24 24"><g fill="#e6e6e6" stroke="#02090c" stroke-width=".8"><path id="petal" d="M12 12C6 12 1 12 1 6.500 1 0 13-1 12 12z"/><use href="#petal" transform="rotate(90 12 12)"/><use href="#petal" transform="rotate(180 12 12)"/><use href="#petal" transform="rotate(270 12 12)"/></g></svg></button>
    <button aria-label="浏览器"><svg viewBox="0 0 24 24"><path d="M6 13h13c1-10-13-10-13 0 0 8 10 8 13 2" fill="none" stroke="#e6e6e6" stroke-width="3.500"/><path d="M3 21C0 15 14 1 21 3c1 1 1 2 0 4" fill="none" stroke="#e6e6e6" stroke-width="1.500"/></svg></button>
    <button aria-label="旋风"><svg viewBox="0 0 24 24"><path d="M21 4c-3 2-7 0-12 2-8 4-5 14 2 15 8 1 11-9 4-11-5-1-8 4-4 7 3 1 5-3 2-4M4 9C5 4 13 2 18 5" fill="none" stroke="#ddd" stroke-width="1.400"/></svg></button>
    <button aria-label="Edge"><svg viewBox="0 0 24 24"><path d="M2 11C4-1 22-1 22 11v3H9c1 6 8 6 12 3v4C13 25 4 21 5 13c1-3 3-5 5-5-4-1-6 1-8 3zM10 10h7c0-5-6-5-7 0z" fill="#0078d7"/></svg></button>
    <button aria-label="商店"><svg viewBox="0 0 24 24"><path d="M8 7V5c0-5 8-5 8 0v2" fill="none" stroke="#eee" stroke-width="1.500"/><path d="M1 6h22v15q0 2-2 2H3q-2 0-2-2z" fill="#fff"/><path d="M7 9h5v5H7z" fill="#f25022"/><path d="M13 9h5v5h-5z" fill="#7fba00"/><path d="M7 15h5v5H7z" fill="#00a4ef"/><path d="M13 15h5v5h-5z" fill="#ffb900"/></svg></button>
    <button aria-label="资源管理器"><svg viewBox="0 0 24 24"><path d="M2 2h8l2 2h10v17H2z" fill="#e9b94a"/><path d="M2 6h20v15H2z" fill="#ffe69b"/><path d="M5 12h14v9h-4v-5H9v5H5z" fill="#3aabe8"/></svg></button>
    <button aria-label="IE"><svg viewBox="0 0 24 24"><path d="M6 13h14c0-12-14-12-14 0 0 9 11 9 14 3" fill="none" stroke="#55b5ee" stroke-width="4"/><path d="M3 22C-1 15 15 1 22 2c1 0 1 2 0 4" fill="none" stroke="#f4cf3c" stroke-width="2"/></svg></button>
    <button class="run" aria-label="广联达G"><svg viewBox="0 0 24 24"><path d="M23 2c-2 5-7 3-11 5-6 3-5 11 1 11 3 0 4-2 2-4l-3-1 8-2c4 7-2 12-8 12C-2 23-2 5 9 3c6-1 10 1 14-1z" fill="#169de4"/></svg></button>
    <button class="run" aria-label="钢筋算量"><svg viewBox="0 0 16 16"><use href="#app"/></svg></button>
    <button class="run" aria-label="便笺"><svg viewBox="0 0 24 24"><rect width="24" height="24" rx="2" fill="#f5a623"/><path d="M3 5l15 1-2 14-11 1z" fill="#fff4cf"/><path d="M6 9h8M6 12h7M6 15h7" stroke="#c8862a"/><path d="M22 1l-8 14-2 3v-4l7-13z" fill="#b0451c"/></svg></button>
    <button class="run" aria-label="安全浏览器"><svg viewBox="0 0 24 24"><circle cx="12" cy="12" r="10" fill="#54bd3b"/><path d="M7 13h10c0-8-10-8-10 0 0 6 8 6 10 2" fill="none" stroke="#fff" stroke-width="2.500"/><path d="M3 23C3 14 13 4 23 2" fill="none" stroke="#9be36a" stroke-width="1.500"/></svg></button>
  </div>
  <div class="tray">
    <svg viewBox="0 0 14 16" width="14" height="16"><path d="M1 11l6-6 6 6" fill="none" stroke="#fff" stroke-width="1.300"/></svg>
    <svg viewBox="0 0 14 16" width="14" height="16"><path d="M1 14C1 7 6 2 13 2M4 14c0-5 4-9 9-9M7 14c0-3 3-6 6-6M10 14c0-2 1-3 3-3" fill="none" stroke="#ddd"/></svg>
    <svg viewBox="0 0 24 16" width="24" height="16"><path d="M1 2.500h22v11H1z" fill="none" stroke="#fff"/><path d="M4 5.500h17M4 8h17M4 11h2M8 11h9M19 11h2" stroke="#fff" stroke-dasharray="1 1"/></svg>
    <span class="ime">中</span>
    <svg viewBox="0 0 16 16" width="16" height="16"><path d="M1 2l13-1 1 13-12 1z" fill="#f04a1c"/><path d="M12 4c-4-1-7-1-7 1s7 2 7 4-4 3-8 2" fill="none" stroke="#fff" stroke-width="2"/></svg>
    <time class="clock">20:39<br>2017/11/28</time>
    <button class="notes" aria-label="通知"><svg viewBox="0 0 16 16" width="16" height="16"><path d="M0 0h16v12H6l-3 3v-3H0z" fill="#fff"/><path d="M2 3h12M2 6h12M2 9h12" stroke="#000"/></svg><span>20</span></button>
  </div>
</div>

<div class="widget">
  <div class="rates">
    <svg viewBox="0 0 8 30" width="8" height="30"><path d="M4 12V5M1 7l3-4 3 4" fill="none" stroke="#e8553c" stroke-width="1.500"/><path d="M4 18v7M1 23l3 4 3-4" fill="none" stroke="#24924a" stroke-width="1.500"/></svg>
    <p>0K/s<br>110K/s</p>
    <svg viewBox="0 0 18 18" width="18" height="18"><circle cx="8" cy="10" r="8" fill="#2f7bd8"/><path d="M8 6v8M4 10h8" stroke="#fff" stroke-width="2"/><circle cx="14" cy="4" r="4" fill="#d8262c"/></svg>
  </div>
  <svg class="ball" viewBox="0 0 50 50"><circle cx="25" cy="25" r="24" fill="#e8e8e8" stroke="#999"/><circle cx="25" cy="25" r="22" fill="url(#gl)"/><ellipse cx="25" cy="7" rx="7" ry="2" fill="#fff" fill-opacity=".7"/><text x="24" y="30">73%</text></svg>
</div>
</body>
</html>
```

FILE: styles.css
```css
* { box-sizing: border-box; }
html, body { height: 100%; }
body {
  margin: 0;
  display: flex;
  flex-direction: column;
  overflow: hidden;
  position: relative;
  background: #f0f0f0;
  color: #000;
  font: 12px/16px "Open Sans", "Noto Sans CJK SC", sans-serif;
}
button, input, select { font: inherit; color: inherit; }
button { border: 0; padding: 0; margin: 0; background: none; }
h1, h2, ul, p { margin: 0; padding: 0; font-size: 12px; font-weight: 400; }
ul { list-style: none; }
.defs { position: absolute; width: 0; height: 0; }
.i { width: 16px; height: 16px; flex: none; }

/* title bar */
.titlebar { flex: none; height: 23px; display: flex; align-items: center; gap: 5px; padding-left: 2px; background: #fff; }
.titlebar h1 { color: #999; font: 13px/20px Roboto, "Noto Sans CJK SC", sans-serif; white-space: nowrap; flex: 1; }
.winbtns { display: flex; padding-right: 2px; }
.winbtns button { width: 46px; height: 22px; display: grid; place-items: center; }
.winbtns svg { width: 12px; height: 12px; fill: none; stroke: #888; }

/* menu row */
.menubar, .mainbar { flex: none; display: flex; align-items: center; white-space: nowrap; }
.menubar { height: 30px; }
.menu { display: flex; gap: 11px; padding: 0 16px 0 7px; }
.band { display: flex; align-items: center; height: 26px; background: linear-gradient(#f9f9f9, #f5f5f5); border-radius: 2px; white-space: nowrap; }
.band.plain { background: none; width: 149px; overflow: hidden; }
.notice { width: 188px; justify-content: flex-end; padding-right: 30px; margin-right: 2px; }
.notice a { color: #6b3000; text-decoration: none; }
.account { flex: 1; padding-left: 5px; }

/* toolbar items */
.t { display: flex; align-items: center; gap: 4px; padding: 0 7px 0 0; height: 24px; }
.t:disabled { color: #888; }
.narrow::after, .wide::after { content: ""; border: 3px solid transparent; border-top-color: currentColor; border-bottom: 0; flex: none; }
.narrow::after { margin-left: -2px; }
.wide::after { margin-left: 2px; }
.t.on { border: 1px solid #0078d7; background: #dce9f5; padding: 0 2px 0 3px; margin: 0 4px 0 -3px; height: 23px; }
.snapbar .t.on { margin-right: 2px; }
.snapbar .t.on + .t.on { margin-left: -2px; }
.textonly { padding-left: 3px; }
.white { background: linear-gradient(90deg, #fff 48px, #f2f2f2 49px); margin-right: 3px; padding-right: 3px; }
.sep { width: 1px; height: 16px; margin-right: 5px; background: #bbb; flex: none; }
.sep.dark { height: 24px; background: #999; margin: 0 8px 0 0; }
.more { margin-left: auto; align-self: flex-start; font: 700 13px/14px "Liberation Sans", sans-serif; padding: 0 7px; }

.mainbar { height: 30px; gap: 3px; margin-bottom: 1px; }
.files { width: 148px; padding-left: 5px; }
.files .t { padding-right: 7px; }
.files .wide::after { margin-left: 0; }
.files .more, .tools .more { padding-right: 2px; }
.tools { width: 551px; padding-left: 6px; }
.views { flex: 1; padding-left: 2px; margin-left: 1px; min-width: 0; }

/* working area */
.work { flex: 1; min-height: 0; display: flex; gap: 5px; }
.side { flex: none; width: 197px; display: flex; flex-direction: column; font-family: "Liberation Mono", "Noto Sans CJK SC", monospace; border-right: 1px solid #ccc; }
.side b, .status b { font: 10px/16px "Liberation Mono", monospace; }
.sidehead { flex: none; height: 15px; margin-bottom: 2px; display: flex; align-items: center; border: 1px solid #777; border-left: 0; }
.sidehead h2 { flex: 1; line-height: 16px; }
.sidehead button { width: 18px; height: 12px; display: grid; place-items: center; }
.sidehead svg { width: 9px; height: 9px; fill: none; stroke: #111; }
.sbtn { flex: none; height: 22px; border: 1px solid #a0a0a0; border-bottom-width: 0; background: #f0f0f0; }
.treebox + .sbtn { margin-top: 1px; }
.treebox ~ .sbtn { border-bottom-width: 1px; }
.sidetools { flex: none; height: 29px; border-top: 1px solid #a0a0a0; background: linear-gradient(#fdfdfd, #f3f3f3); padding: 6px 5px; display: flex; gap: 5px; }
.sidetools svg { width: 18px; height: 16px; display: block; fill: none; }
.treebox { flex: 1; min-height: 0; display: flex; overflow: hidden; margin-left: 2px; border: 1px solid #828790; background: #fff; }
.tree { flex: 1; overflow: hidden; }
.tree > li { background: repeating-linear-gradient(#888 0 1px, transparent 1px 2px) 12px 0 / 1px 100% no-repeat; }
.tree li li, .folder { display: flex; align-items: center; height: 16px; gap: 4px; white-space: nowrap; }
.tree li li {
  padding-left: 42px;
  background:
    repeating-linear-gradient(#888 0 1px, transparent 1px 2px) 31px 0 / 1px 100% no-repeat,
    repeating-linear-gradient(90deg, #888 0 1px, transparent 1px 2px) 31px 8px / 11px 1px no-repeat;
}
.tree li li.last { background-size: 1px 50%, 11px 1px; }
.tree b { margin-left: -4px; }
.sel { display: flex; background: #d8d8d8; padding: 0 5px 0 4px; margin-left: -4px; }
.sel b { margin-left: 0; }
.folder { padding-left: 7px; }
.folder .i { margin-left: 2px; }
.chev { width: 10px; height: 8px; flex: none; fill: none; stroke: #444; stroke-width: 1.6px; background: #fff; }
.chev.closed { stroke: #999; }
.scroll { width: 17px; flex: none; background: #f0f0f0; display: flex; flex-direction: column; align-items: center; padding: 6px 0; gap: 5px; }
.scroll .chev { background: none; }
.track { flex: 1; width: 15px; display: grid; grid-template-rows: 188fr 221fr 37fr; }
.thumb { grid-row: 2; background: #cdcdcd; }

.main { flex: 1; min-width: 0; display: flex; flex-direction: column; }
.row { flex: none; display: flex; align-items: center; height: 28px; }
.r3 { height: 27px; }
.r5 { height: 29px; }
.grip::before { content: ""; width: 3px; height: 14px; margin: 0 4px; flex: none; background: repeating-linear-gradient(#aaa 0 2px, transparent 2px 4px); }
.r3 .band, .r4 .band { padding-right: 2px; }
.axis { margin-left: 71px; }
.fill { flex: 1; min-width: 0; }
.stub { width: 33px; background: #fafafa; }
.combo { display: grid; width: 70px; height: 22px; margin-right: 2px; background: #fff; align-items: center; }
.combo.s { width: 59px; margin-right: 1px; }
.combo select { grid-area: 1 / 1; appearance: none; border: 0; background: none; padding: 0 12px 0 0; height: 22px; width: 100%; }
.combo::after { content: ""; grid-area: 1 / 1; justify-self: end; margin-right: 6px; border: 3px solid transparent; border-top-color: #000; border-bottom: 0; pointer-events: none; }
.combo.boxed { width: 56px; border: 1px solid #777; margin: 0 4px 0 -2px; }
.combo.boxed::after { border-top-color: #888; margin-right: 3px; }
.combo.boxed select { height: 20px; }

.view { flex: 1; min-height: 0; width: 100%; display: block; shape-rendering: crispEdges; }
.axisname { fill: #fff; font: 15px "Liberation Sans", sans-serif; text-anchor: middle; }

.snapbar { height: 31px; }
.offsets { color: #777; }
.offsets .combo, .blk { color: #000; }
.offsets .sep { margin: 0 2px 0 1px; }
.offsets em { font-style: normal; padding: 0 4px 0 2px; }
.num { display: flex; width: 58px; height: 23px; border: 1px solid #777; background: #f4f4f4; margin-left: 2px; }
.num.big { width: 69px; margin-left: 5px; }
.num input { width: 0; flex: 1; min-width: 0; border: 0; background: none; text-align: right; padding: 0 5px 2px 0; }
.num > span { width: 13px; display: flex; flex-direction: column; }
.num button { flex: 1; display: grid; place-items: center; }
.num button::after { content: ""; border: 3px solid transparent; border-bottom-color: #555; border-top: 0; }
.num button.d::after { border-bottom: 0; border-top: 3px solid #555; }
.offsets input[type=checkbox] { appearance: none; width: 11px; height: 11px; margin: 0 8px 0 2px; border: 1px solid #888; background: #f4f4f4; }

/* status bar */
.status { flex: none; height: 22px; display: flex; gap: 2px; padding: 1px 0; font-family: "Liberation Mono", "Noto Sans CJK SC", monospace; border-top: 1px solid #fff; }
.status div { border: 1px solid #d5d5d5; background: linear-gradient(#fff, #f1f1f1); padding: 1px 0 0 1px; white-space: pre; display: flex; }
.c1 { width: 148px; } .c2 { width: 78px; } .c3 { width: 98px; } .c4 { width: 48px; } .c5 { flex: 1; } .c6 { width: 70px; }

/* task bar */
.taskbar { flex: none; height: 40px; display: flex; background: linear-gradient(#262626 9px, transparent 9px) 392px 0 / 738px 100% no-repeat #020a0d; color: #fff; }
.start { width: 48px; background: #000; display: grid; place-items: center; }
.search { width: 344px; background: #333; display: flex; align-items: center; padding: 0 14px 0 9px; gap: 5px; }
.search input { flex: 1; min-width: 0; border: 0; background: none; font-size: 14px; padding: 0; }
.search input::placeholder { color: #999; opacity: 1; }
.apps { flex: 1; display: flex; margin-left: -1px; }
.apps button { flex: 0 0 50px; display: grid; place-items: center; }
.apps svg { width: 24px; height: 24px; }
.apps .run { background: linear-gradient(#76b9ed, #76b9ed) center bottom / 40px 2px no-repeat; }
.tray { display: flex; align-items: center; gap: 10px; padding-right: 4px; }
.ime { font-size: 14px; margin-right: 2px; }
.clock { text-align: center; line-height: 19px; margin-left: 4px; }
.notes { display: grid; align-self: stretch; align-items: center; border-right: 1px solid #555; padding: 0 11px 0 5px; }
.notes svg { grid-area: 1 / 1; }
.notes span { grid-area: 1 / 1; margin: 12px 0 0 5px; width: 21px; height: 17px; border-radius: 9px; background: #333; border: 1px solid #999; font-weight: 700; line-height: 15px; }

/* floating speed widget */
.widget { position: absolute; left: 899px; top: 26px; filter: drop-shadow(1px 2px 2px rgba(0, 0, 0, .35)); }
.rates { display: flex; align-items: center; gap: 6px; height: 36px; width: 97px; margin: 8px 0 0 31px; padding: 0 5px 0 20px; border-radius: 18px; background: linear-gradient(#f4f4f4, #d9d9d9); font-size: 10px; line-height: 15px; text-align: right; }
.rates svg { flex: none; }
.rates p { flex: 1; font-size: 10px; }
.ball { position: absolute; left: 0; top: 0; width: 50px; height: 50px; }
.ball text { fill: #fff; font: 15px "Liberation Sans", sans-serif; text-anchor: middle; }
```
